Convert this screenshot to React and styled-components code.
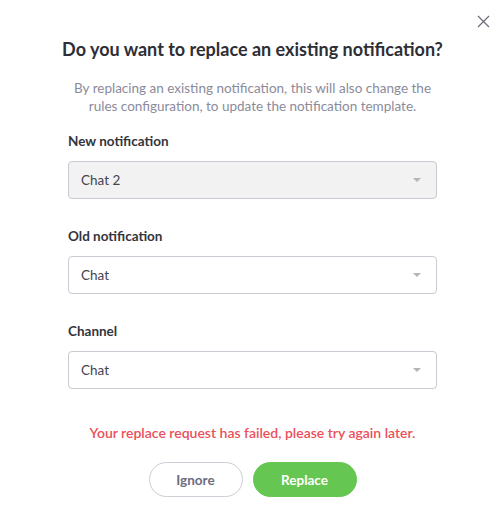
import React from 'react';
import styled, { createGlobalStyle } from 'styled-components';

const GlobalStyle = createGlobalStyle`
  html, body {
    margin: 0;
    padding: 0;
    background: #ffffff;
  }
  body {
    font-family: Lato, "Open Sans", sans-serif;
  }
`;

const Dialog = styled.div`
  position: relative;
  width: 503px;
  height: 525px;
  box-sizing: border-box;
  padding: 38px 66px 0 68px;
  background: #fff;
  display: flex;
  flex-direction: column;
`;

const CloseButton = styled.button`
  position: absolute;
  top: 13px;
  right: 12px;
  width: 16px;
  height: 16px;
  padding: 0;
  border: none;
  background: transparent;
  cursor: pointer;
  display: flex;
  align-items: center;
  justify-content: center;
`;

const Title = styled.h2`
  align-self: center;
  margin: 0;
  font-size: 18px;
  line-height: 22px;
  font-weight: 700;
  color: #2e2e36;
  text-align: center;
  white-space: nowrap;
`;

const Description = styled.p`
  margin: 19px 0 0;
  font-size: 13.5px;
  line-height: 18px;
  color: #8b8b9b;
  text-align: center;
`;

const Field = styled.div`
  display: flex;
  flex-direction: column;
  gap: 11px;
  margin-top: ${(p) => (p.first ? '17px' : '28px')};
`;

const Label = styled.label`
  font-size: 13.5px;
  line-height: 18px;
  font-weight: 700;
  color: #34343c;
`;

const Select = styled.div`
  height: 38px;
  box-sizing: border-box;
  border: 1px solid #cacad2;
  border-radius: 4px;
  background: ${(p) => (p.disabled ? '#f2f2f2' : '#ffffff')};
  display: flex;
  align-items: center;
  justify-content: space-between;
  padding: 0 15px 0 12px;
  font-size: 13.5px;
  color: #45454f;
`;

const Caret = styled.span`
  width: 0;
  height: 0;
  border-left: 4px solid transparent;
  border-right: 4px solid transparent;
  border-top: 4px solid #b4b4bc;
`;

const ErrorText = styled.p`
  margin: 35px 0 0;
  font-size: 14px;
  line-height: 18px;
  font-weight: 600;
  color: #ea4f5a;
  text-align: center;
`;

const Actions = styled.div`
  display: flex;
  justify-content: center;
  gap: 10px;
  margin-top: 20px;
`;

const Button = styled.button`
  height: 35px;
  box-sizing: border-box;
  border-radius: 18px;
  font-family: inherit;
  font-size: 13.5px;
  font-weight: 700;
  cursor: pointer;
  width: ${(p) => p.width}px;
  border: 1px solid ${(p) => (p.primary ? '#65c751' : '#cdcdd6')};
  background: ${(p) => (p.primary ? '#65c751' : '#ffffff')};
  color: ${(p) => (p.primary ? '#ffffff' : '#6c6c80')};
`;

const fields = [
  { label: 'New notification', value: 'Chat 2', disabled: true },
  { label: 'Old notification', value: 'Chat' },
  { label: 'Channel', value: 'Chat' },
];

const App = () => (
  <>
    <GlobalStyle />
    <Dialog>
      <CloseButton aria-label="Close">
        <svg width="13" height="13" viewBox="0 0 13 13">
          <path d="M1 1L12 12M12 1L1 12" stroke="#6f6f7d" strokeWidth="1.3" fill="none" />
        </svg>
      </CloseButton>
      <Title>Do you want to replace an existing notification?</Title>
      <Description>
        By replacing an existing notification, this will also change the
        <br />
        rules configuration, to update the notification template.
      </Description>
      {fields.map((f, i) => (
        <Field key={f.label} first={i === 0}>
          <Label>{f.label}</Label>
          <Select disabled={f.disabled}>
            <span>{f.value}</span>
            <Caret />
          </Select>
        </Field>
      ))}
      <ErrorText>Your replace request has failed, please try again later.</ErrorText>
      <Actions>
        <Button width={94}>Ignore</Button>
        <Button primary width={104}>Replace</Button>
      </Actions>
    </Dialog>
  </>
);

export default App;
